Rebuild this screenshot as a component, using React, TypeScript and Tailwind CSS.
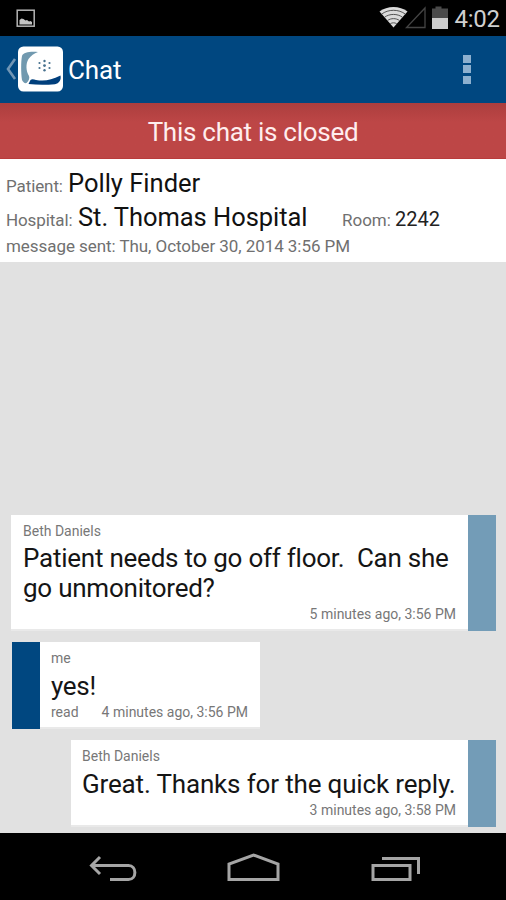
import type { ReactNode } from 'react';

function StatusBar() {
  return (
    <div className="flex h-[35.5px] shrink-0 items-start bg-black">
      <svg className="ml-4 mt-[9px]" width="20" height="19" viewBox="0 0 20 19">
        <rect x="1.2" y="1.2" width="17" height="16" fill="none" stroke="#b4b4b4" strokeWidth="1.5" />
        <path d="M3.5 15.5V11L5.500 9.500l2 .5 2 1.500 1.500-.5 2 1.500L14.500 12l1.5 1v2.500z" fill="#c4c4c4" />
      </svg>
      <svg className="ml-auto" width="71" height="35" viewBox="0 0 71 35">
        <path d="M0.5 11.5C8 5.5 21 5.5 28.5 11.5L14.5 27.5Z" fill="#dadada" />
        <g fill="none" stroke="#444" strokeWidth="0.900">
          <path d="M2.6 14.2C9 9 20 9 26.4 14.2" />
          <path d="M5.6 17.2C10.500 13.500 18.500 13.500 23.400 17.200" />
          <path d="M8.500 20.500C12 18 17 18 20.500 20.500" />
          <path d="M11.300 23.700C13.300 22.500 15.700 22.500 17.700 23.700" />
        </g>
        <path d="M27.500 27.500H46V8z" fill="none" stroke="#444" strokeWidth="1.300" />
        <path d="M53 8.500h3.500V6.500h6v2H69V18H53z" fill="#4a4a4a" />
        <path d="M53 18h16v11H53z" fill="#cbcbcb" />
      </svg>
      <span className="ml-[5px] mr-[6.500px] w-[45px] whitespace-nowrap text-[24px] leading-[39px] tracking-[-0.3px] text-[#cfcfcf]">4:02</span>
    </div>
  );
}

function ActionBar() {
  return (
    <header className="flex h-[67px] shrink-0 items-center bg-[#004780]">
      <svg className="ml-[5px] shrink-0" width="12" height="24" viewBox="0 0 12 24">
        <path d="M10 2L3 12l7 10" fill="none" stroke="#7196b5" strokeWidth="2.600" />
      </svg>
      <svg className="shrink-0" width="47" height="47" viewBox="17 46 47 47">
        <rect x="18" y="46.500" width="45" height="45" rx="5.500" fill="#fff" />
        <path d="M38 52C30 51.500 23.500 52 22 56C20.800 62 21 73 22 80C23 82.500 25 83.500 26.500 83C28.500 81 30 78.500 29 76C26 71 25.500 64 28.500 59C31 55.500 34 53.500 38 52Z" fill="#7199af" />
        <path d="M30.500 80C32 78.500 34 79.500 36 80C45 81.500 51 80 60.500 75.500C61.500 80 59 83.500 55 84.200C46 85 37 85 28.500 84Z" fill="#003f7c" />
        <g fill="#47718e">
          <circle cx="44.500" cy="61" r="1.200" />
          <circle cx="44.500" cy="65.600" r="1.400" />
          <circle cx="44.500" cy="70.200" r="1.200" />
          <circle cx="39.500" cy="63" r="1.100" />
          <circle cx="39.500" cy="68" r="1.100" />
          <circle cx="49.500" cy="63" r="1.100" />
          <circle cx="49.500" cy="68" r="1.100" />
        </g>
      </svg>
      <h1 className="ml-1 mt-[2px] text-[26px] leading-[34px] tracking-[-0.1px] text-white">Chat</h1>
      <div className="ml-auto mr-[35px] flex flex-col gap-[2.500px]">
        <i className="size-2 bg-[#8db0cf]" />
        <i className="size-2 bg-[#8db0cf]" />
        <i className="size-2 bg-[#8db0cf]" />
      </div>
    </header>
  );
}

function PatientInfo() {
  return (
    <section className="h-[103.500px] shrink-0 whitespace-nowrap bg-white pl-[6px] pt-[7px] text-[17px] text-[#707070]">
      <div className="flex h-[34px] items-baseline leading-[34px]">
        <span className="w-[62px] tracking-[-0.1px]">Patient:</span>
        <span className="text-[25.500px] text-[#111]">Polly Finder</span>
      </div>
      <div className="flex h-[34px] items-baseline leading-[34px]">
        <span className="w-[72px] tracking-[-0.1px]">Hospital:</span>
        <span className="w-[264px] text-[25.500px] tracking-[-0.05px] text-[#111]">St. Thomas Hospital</span>
        <span className="w-[53px]">Room:</span>
        <span className="text-[20px] text-[#222]">2242</span>
      </div>
      <div className="mt-px leading-[22px] tracking-[-0.06px]">message sent: Thu, October 30, 2014 3:56 PM</div>
    </section>
  );
}

function Meta({ children }: { children: ReactNode }) {
  return <span className="text-[14px] leading-[18px] text-[#777]">{children}</span>;
}

function Messages() {
  return (
    <main className="flex grow flex-col justify-end bg-[#e1e1e1] pb-[6px] pl-[11px] pr-[10.500px]">
      <article className="flex h-[116px] border-b-2 border-[#e9e9e9]">
        <div className="flex min-w-0 grow flex-col whitespace-pre bg-white pl-3 pr-[11.500px] pt-[7px]">
          <Meta>Beth Daniels</Meta>
          <p className="mt-[3px] text-[26px] leading-[30px] tracking-[-0.24px] text-[#151515]">{'Patient needs to go off floor.  Can she\ngo unmonitored?'}</p>
          <div className="mt-[2px] flex justify-end"><Meta>5 minutes ago, 3:56 PM</Meta></div>
        </div>
        <div className="-mb-[2px] w-7 shrink-0 bg-[#739cb7]" />
      </article>
      <article className="mt-[11px] flex h-[87px] w-[248.500px] border-b-2 border-[#e9e9e9]">
        <div className="-mb-[2px] ml-px w-[28px] shrink-0 bg-[#004780]" />
        <div className="flex grow flex-col whitespace-nowrap bg-white pl-[11px] pr-[11.500px] pt-[7px]">
          <Meta>me</Meta>
          <p className="mt-[4px] text-[26px] leading-[30px] tracking-[-0.3px] text-[#151515]">yes!</p>
          <div className="mt-[2px] flex justify-between"><Meta>read</Meta><Meta>4 minutes ago, 3:56 PM</Meta></div>
        </div>
      </article>
      <article className="ml-[59.500px] mt-[11px] flex h-[87px] border-b-2 border-[#e9e9e9]">
        <div className="flex min-w-0 grow flex-col whitespace-nowrap bg-white pl-[11.500px] pr-[11.500px] pt-[7px]">
          <Meta>Beth Daniels</Meta>
          <p className="mt-[4px] text-[26px] leading-[30px] tracking-[-0.16px] text-[#151515]">Great. Thanks for the quick reply.</p>
          <div className="mt-[2px] flex justify-end"><Meta>3 minutes ago, 3:58 PM</Meta></div>
        </div>
        <div className="-mb-[2px] w-7 shrink-0 bg-[#739cb7]" />
      </article>
    </main>
  );
}

function NavBar() {
  return (
    <nav className="h-[67px] shrink-0 bg-black">
      <svg width="506" height="67" viewBox="0 833 506 67" fill="none" stroke="#a5a5a5" strokeWidth="3">
        <path d="M100 857l-8.500 8.500L100 874M92 865.500H128.500C137 865.500 137 879.500 128.500 879.500H110" />
        <path d="M229 879.500V864L253.500 855L278 864V879.500Z" />
        <path d="M373 865.500H410V879.500H373ZM382 858.500H418.500V874" />
      </svg>
    </nav>
  );
}

export default function App() {
  return (
    <div className="flex h-[900px] w-[506px] flex-col overflow-hidden bg-[#e1e1e1] font-['Roboto',sans-serif]">
      <StatusBar />
      <ActionBar />
      <div className="h-[56px] shrink-0 border-b border-[#b93c3c] bg-gradient-to-b from-[#ac3e3e] to-[#bd4646] to-35% text-center text-[26px] leading-[59px] tracking-[-0.27px] text-[#ffeeee]">
        This chat is closed
      </div>
      <PatientInfo />
      <Messages />
      <NavBar />
    </div>
  );
}
